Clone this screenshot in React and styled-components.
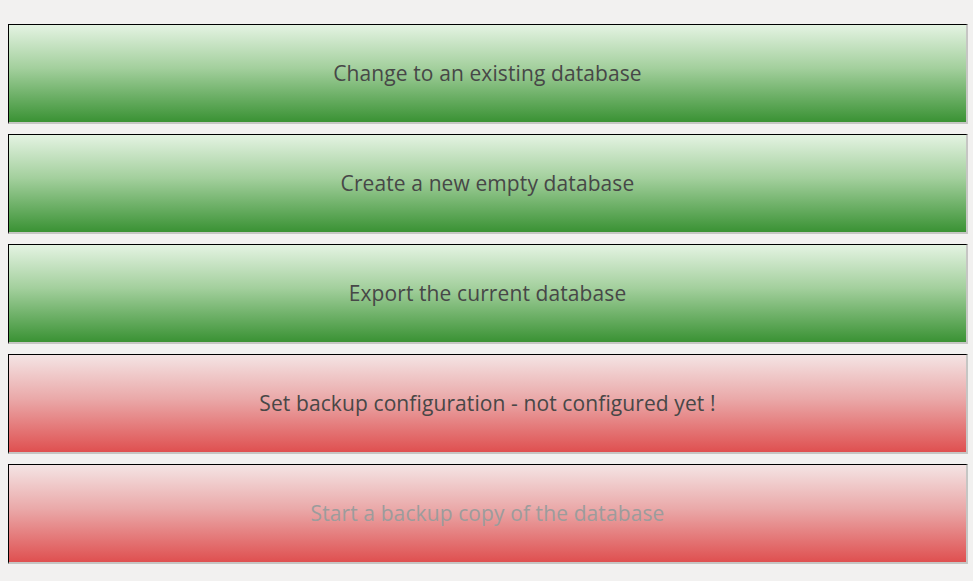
import React from "react";
import styled, { createGlobalStyle, css } from "styled-components";

const actions = [
  { label: "Change to an existing database", tone: "green" },
  { label: "Create a new empty database", tone: "green" },
  { label: "Export the current database", tone: "green" },
  { label: "Set backup configuration - not configured yet !", tone: "red" },
  { label: "Start a backup copy of the database", tone: "red", disabled: true },
];

const App = () => {
  return (
    <>
      <GlobalStyle />
      <Panel>
        {actions.map((item) => (
          <ActionButton key={item.label} $tone={item.tone} $disabled={item.disabled}>
            {item.label}
          </ActionButton>
        ))}
      </Panel>
    </>
  );
};

const GlobalStyle = createGlobalStyle`
  html, body {
    margin: 0;
    background: #f2f1f0;
  }
`;

const Panel = styled.div`
  display: flex;
  flex-direction: column;
  gap: 10px;
  padding: 24px 5px 17px 8px;
`;

const tones = {
  green: css`
    background: linear-gradient(to bottom, #e4f3e2 0%, #a2cf9c 45%, #3a9234 100%);
  `,
  red: css`
    background: linear-gradient(to bottom, #f4e4e4 0%, #eaa9a9 45%, #df5050 100%);
  `,
};

const ActionButton = styled.div`
  display: flex;
  align-items: center;
  justify-content: center;
  box-sizing: border-box;
  height: 100px;
  padding-bottom: 1px;
  border-top: 1px solid #000;
  border-left: 1px solid #000;
  border-right: 2px solid #c6c6c4;
  border-bottom: 2px solid #c6c6c4;
  font-family: "Open Sans", "DejaVu Sans", sans-serif;
  font-size: 21px;
  letter-spacing: 0.1px;
  color: ${(p) => (p.$disabled ? "#9c9c9c" : "#474747")};
  ${(p) => tones[p.$tone]}
`;

export default App;
